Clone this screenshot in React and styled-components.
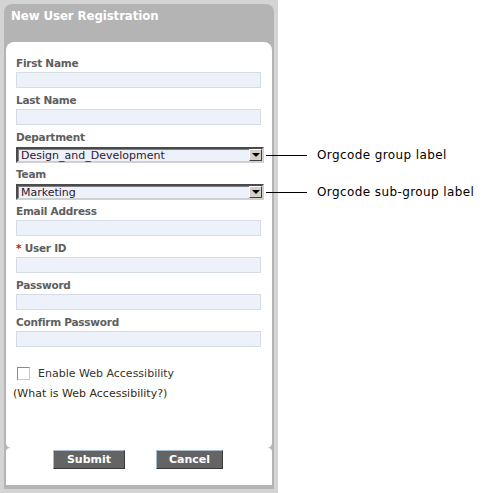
import React from 'react';
import styled, { createGlobalStyle } from 'styled-components';

const GlobalStyle = createGlobalStyle`
  body {
    margin: 0;
    background: #ffffff;
    font-family: 'DejaVu Sans', Verdana, sans-serif;
  }
`;

const Page = styled.div`
  width: 485px;
  height: 493px;
  background: #ffffff;
`;

const Frame = styled.div`
  width: 270px;
  height: 485px;
  padding: 4px;
  background: #d4d4d4;
`;

const Panel = styled.div`
  height: 485px;
  box-sizing: border-box;
  background: #b4b4b4;
  border-radius: 8px 8px 0 0;
  padding: 0 2px 4px;
  display: flex;
  flex-direction: column;
`;

const Header = styled.h1`
  margin: 0;
  height: 38px;
  padding: 4px 0 0 5px;
  box-sizing: border-box;
  font-size: 11.8px;
  font-weight: bold;
  color: #ffffff;
  line-height: 16px;
  letter-spacing: -0.1px;
`;

const Body = styled.div`
  position: relative;
  height: 406px;
  box-sizing: border-box;
  background: #ffffff;
  border-radius: 8px 8px 5px 5px;
  padding: 9px 10px 0;
`;

const Field = styled.div`
  position: relative;
  margin-top: 3px;
  width: 245px;
`;

const Label = styled.label`
  display: block;
  height: 18px;
  line-height: 18px;
  font-size: 10.5px;
  font-weight: bold;
  letter-spacing: -0.25px;
  color: #5e5e5e;
  white-space: nowrap;
`;

const Star = styled.span`
  color: #d4101e;
`;

const Input = styled.div`
  height: 16px;
  box-sizing: border-box;
  background: #edf1f9;
  border: 1px solid #d6dce6;
`;

const Select = styled.div`
  position: relative;
  width: 248px;
  height: 16px;
  margin-top: 1px;
  margin-bottom: -1px;
  box-sizing: border-box;
  background: #edf1f9;
  border-style: solid;
  border-width: 2px;
  border-color: #4a4a4a #d0d0d0 #d0d0d0 #4a4a4a;
  box-shadow: inset 1px 1px 0 #808080;
  display: flex;
  align-items: center;
  justify-content: space-between;
  padding-left: 3px;
  font-size: 11px;
  color: #301830;
  white-space: nowrap;
`;

const Arrow = styled.span`
  width: 13px;
  height: 12px;
  box-sizing: border-box;
  background: #d4d0c8;
  border-style: solid;
  border-width: 1px;
  border-color: #ffffff #404040 #404040 #ffffff;
  display: flex;
  align-items: center;
  justify-content: center;
  &::after {
    content: '';
    border-left: 4px solid transparent;
    border-right: 4px solid transparent;
    border-top: 4px solid #000;
  }
`;

const Callout = styled.div`
  position: absolute;
  left: 248px;
  top: 50%;
  transform: translateY(-50%);
  display: flex;
  align-items: center;
  gap: 10px;
  font-size: 12px;
  letter-spacing: 0.4px;
  color: #000;
  white-space: nowrap;
  &::before {
    content: '';
    width: 41px;
    height: 1px;
    background: #000;
  }
`;

const CheckRow = styled.div`
  display: flex;
  align-items: center;
  margin-top: 20px;
  padding-left: 1px;
  gap: 8px;
  font-size: 11px;
  color: #333;
`;

const Box = styled.span`
  width: 13px;
  height: 13px;
  box-sizing: border-box;
  border: 1px solid #8a8a8a;
  border-right-color: #c8c8c8;
  border-bottom-color: #c8c8c8;
  background: #fff;
`;

const HelpLink = styled.a`
  display: block;
  margin: 7px 0 0 -3px;
  font-size: 11px;
  color: #3a2808;
  text-decoration: none;
`;

const Footer = styled.div`
  flex: 1;
  background: #ffffff;
  border-radius: 4px 4px 0 0;
  display: flex;
  gap: 31px;
  padding: 2px 0 0 47px;
`;

const Button = styled.button`
  width: ${p => p.$w}px;
  height: 19px;
  padding: 0;
  background: #646464;
  border-style: solid;
  border-width: 1px;
  border-color: #a8bbd3 #3a3a3a #3a3a3a #a8bbd3;
  color: #ffffff;
  font-family: 'DejaVu Sans', Verdana, sans-serif;
  font-size: 11px;
  font-weight: bold;
`;

const fields = [
  { label: 'First Name' },
  { label: 'Last Name' },
  { label: 'Department', select: 'Design_and_Development', note: 'Orgcode group label' },
  { label: 'Team', select: 'Marketing', note: 'Orgcode sub-group label' },
  { label: 'Email Address' },
  { label: 'User ID', required: true },
  { label: 'Password' },
  { label: 'Confirm Password' },
];

export default function App() {
  return (
    <Page>
      <GlobalStyle />
      <Frame>
        <Panel>
          <Header>New User Registration</Header>
          <Body>
            {fields.map(f => (
              <Field key={f.label}>
                <Label>
                  {f.required && <Star>* </Star>}
                  {f.label}
                </Label>
                {f.select ? (
                  <Select>
                    {f.select}
                    <Arrow />
                    <Callout>{f.note}</Callout>
                  </Select>
                ) : (
                  <Input />
                )}
              </Field>
            ))}
            <CheckRow>
              <Box />
              Enable Web Accessibility
            </CheckRow>
            <HelpLink>(What is Web Accessibility?)</HelpLink>
          </Body>
          <Footer>
            <Button $w={72}>Submit</Button>
            <Button $w={67}>Cancel</Button>
          </Footer>
        </Panel>
      </Frame>
    </Page>
  );
}
